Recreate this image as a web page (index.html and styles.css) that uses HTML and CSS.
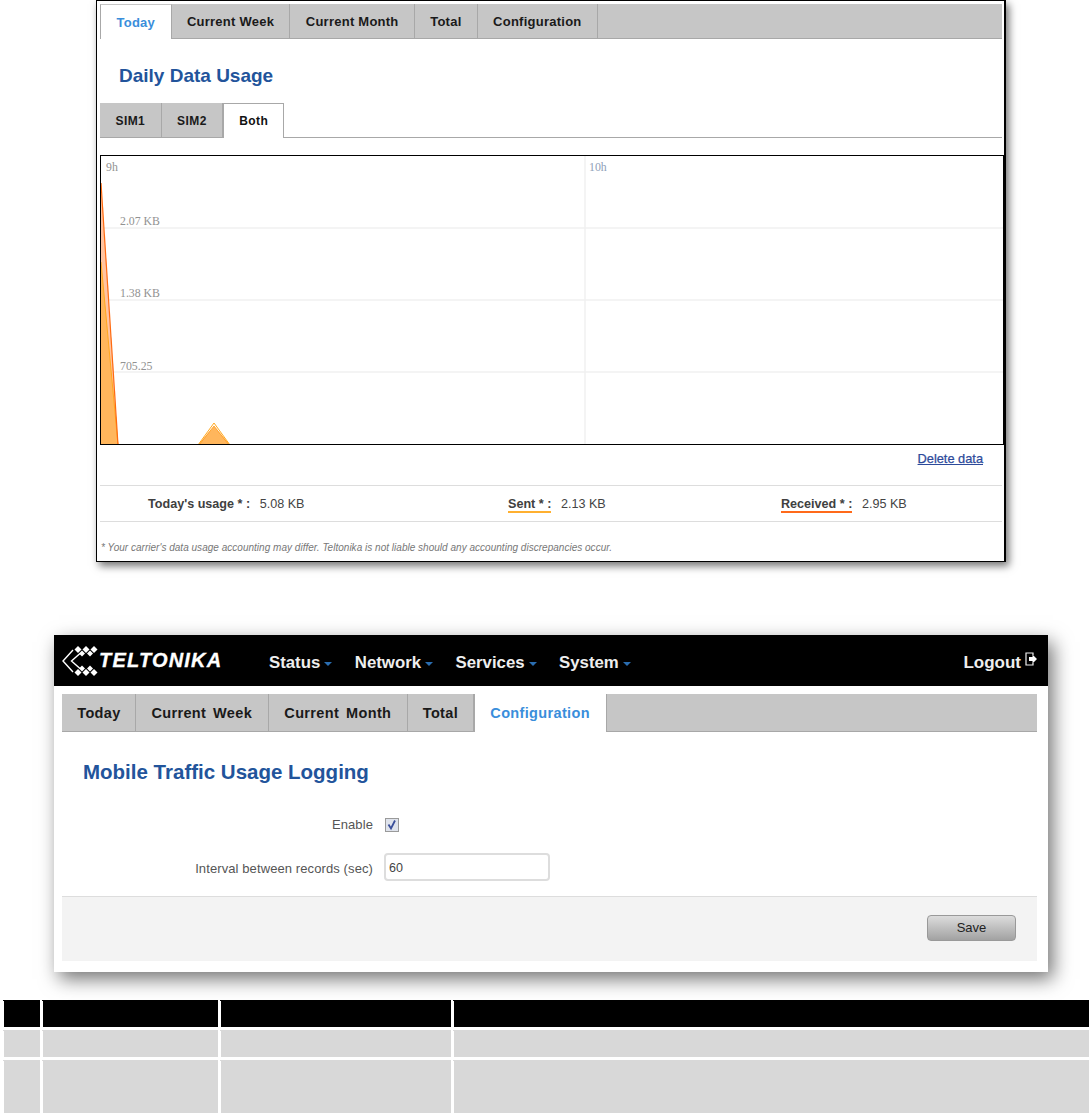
FILE: index.html
```html
<!DOCTYPE html>
<html lang="en">
<head>
<meta charset="utf-8">
<title>Teltonika mobile traffic usage</title>
<link rel="stylesheet" href="styles.css">
</head>
<body>
<section class="usage-card">
  <nav class="tabs small">
    <a class="tab active">Today</a>
    <a class="tab">Current Week</a>
    <a class="tab">Current Month</a>
    <a class="tab">Total</a>
    <a class="tab">Configuration</a>
  </nav>
  <h2 class="usage-title">Daily Data Usage</h2>
  <nav class="subtabs">
    <a class="subtab">SIM1</a>
    <a class="subtab">SIM2</a>
    <a class="subtab active">Both</a>
  </nav>
  <div class="chart">
    <svg class="chart-svg" width="902" height="288" viewBox="101 156 902 288">
      <g class="grid">
        <line x1="101" y1="228" x2="1003" y2="228"/>
        <line x1="101" y1="300" x2="1003" y2="300"/>
        <line x1="101" y1="372" x2="1003" y2="372"/>
        <line x1="585" y1="156" x2="585" y2="444"/>
      </g>
      <polygon class="area-recv" points="101,183 118,445 101,445"/>
      <polygon class="area-sent" points="101,262 118,445 101,445"/>
      <polygon class="area-sent" points="214,426 198,445 230,445"/>
      <polyline class="line-sent" points="198,445 214,423 230,445"/>
      <polyline class="line-sent" points="101,262 118,445"/>
      <polyline class="line-recv" points="101,183 118,445"/>
      <polyline class="line-recv thin" points="199,445 214,426 229,445"/>
      <g class="axis">
        <text x="106" y="171">9h</text>
        <text class="alt" x="589" y="171">10h</text>
        <text x="120" y="225">2.07 KB</text>
        <text x="120" y="297">1.38 KB</text>
        <text x="120" y="370">705.25</text>
      </g>
    </svg>
  </div>
  <div class="delete-row"><a class="delete-link">Delete data</a></div>
  <div class="stats">
    <div class="stat first"><span class="stat-label">Today's usage * :</span><span class="stat-value">5.08 KB</span></div>
    <div class="stat second"><span class="stat-label sent">Sent * :</span><span class="stat-value">2.13 KB</span></div>
    <div class="stat third"><span class="stat-label recv">Received * :</span><span class="stat-value">2.95 KB</span></div>
  </div>
  <p class="note">* Your carrier's data usage accounting may differ. Teltonika is not liable should any accounting discrepancies occur.</p>
</section>

<section class="config-card">
  <header class="topbar">
    <div class="logo">
      <svg class="logo-mark" width="38" height="30" viewBox="0 0 38 30">
        <path class="chev" d="M11 4 L1 15 L11 26"/>
        <path class="chev" d="M18 7.500 L9.500 15 L18 22.500"/>
        <g class="dots">
          <path d="M16 0 l3.500 3.500 l-3.500 3.500 l-3.500 -3.500z"/>
          <path d="M20 4.500 l3 3 l-3 3 l-3 -3z"/>
          <path d="M24 0 l3.500 3.500 l-3.500 3.500 l-3.500 -3.500z"/>
          <path d="M28 4.500 l3 3 l-3 3 l-3 -3z"/>
          <path d="M32 0 l3.500 3.500 l-3.500 3.500 l-3.500 -3.500z"/>
          <path d="M16 23 l3.500 3.500 l-3.500 3.500 l-3.500 -3.500z"/>
          <path d="M20 19.500 l3 3 l-3 3 l-3 -3z"/>
          <path d="M24 23 l3.500 3.500 l-3.500 3.500 l-3.500 -3.500z"/>
          <path d="M28 19.500 l3 3 l-3 3 l-3 -3z"/>
          <path d="M32 23 l3.500 3.500 l-3.500 3.500 l-3.500 -3.500z"/>
        </g>
      </svg>
      <span class="logo-text">TELTONIKA</span>
    </div>
    <ul class="menu">
      <li class="menu-item">Status<i class="caret"></i></li>
      <li class="menu-item">Network<i class="caret"></i></li>
      <li class="menu-item">Services<i class="caret"></i></li>
      <li class="menu-item">System<i class="caret"></i></li>
    </ul>
    <a class="logout">Logout
      <svg class="logout-icon" width="12" height="14" viewBox="0 0 12 14">
        <path class="door" d="M8 3 V1 H1 V13 H8 V11"/>
        <path class="arrow" d="M4 5 H7.500 V2.500 L12 7 L7.500 11.500 V9 H4z"/>
      </svg>
    </a>
  </header>
  <div class="config-body">
    <nav class="tabs large">
      <a class="tab">Today</a>
      <a class="tab">Current Week</a>
      <a class="tab">Current Month</a>
      <a class="tab">Total</a>
      <a class="tab active">Configuration</a>
    </nav>
    <h2 class="config-title">Mobile Traffic Usage Logging</h2>
    <form class="form">
      <label class="form-label">Enable</label>
      <span class="checkbox">
        <svg width="13" height="13" viewBox="0 0 13 13"><path d="M3.500 6.500 L6 10.500 L10 2.500"/></svg>
      </span>
      <label class="form-label lower">Interval between records (sec)</label>
      <input class="text-input" type="text" value="60">
    </form>
    <footer class="form-footer"><button class="save" type="button">Save</button></footer>
  </div>
</section>

<div class="table">
  <div class="cell head"></div><div class="cell head"></div><div class="cell head"></div><div class="cell head"></div>
  <div class="cell row-a"></div><div class="cell row-a"></div><div class="cell row-a"></div><div class="cell row-a"></div>
  <div class="cell row-b"></div><div class="cell row-b"></div><div class="cell row-b"></div><div class="cell row-b"></div>
</div>
</body>
</html>
```
FILE: styles.css
```css
* { box-sizing: border-box; }
html, body { margin: 0; padding: 0; background: #fff; }
body { font-family: "Liberation Sans", Arial, sans-serif; color: #404040; height: 1116px; overflow: hidden; }

/* shared tabs */
.tabs { display: flex; background: #c6c6c6; border-bottom: 1px solid #a8a8a8; }
.tab { display: flex; align-items: center; font-weight: bold; color: #1a1a1a; border-right: 1px solid #a8a8a8; }
.tab.active { background: #fff; color: #3a8edb; margin-bottom: -1px; }
.tabs.small { width: 902px; height: 35px; font-size: 13px; letter-spacing: .25px; }
.tabs.small .tab { padding: 0 15.300px; }
.tabs.small .tab.active { border: 1px solid #a8a8a8; border-bottom: 0; border-top-color: #c6c6c6; padding: 0 15.500px; }
.tabs.large { height: 38px; font-size: 14.500px; letter-spacing: .35px; word-spacing: 2.500px; }
.tabs.large .tab { padding: 0 15.250px; }
.tabs.large .tab:first-child { padding-right: 14.500px; }
.tabs.large .tab:nth-child(2) { padding-right: 16px; }
.tabs.large .tab.active { border-left: 1px solid #a8a8a8; padding: 0 16px 0 15px; }

/* top card */
.usage-card { width: 910px; height: 562px; margin-left: 96px; padding: 3px 0 0 3px; background: #fff;
  border: 1px solid #000; border-right-width: 2px; box-shadow: 3px 4px 8px rgba(0,0,0,.55); }
.usage-title { margin: 0; padding: 25px 0 0 19px; height: 64px; font-size: 19px; line-height: 24px; color: #22549b; }
.subtabs { display: flex; width: 902px; height: 35px; border-bottom: 1px solid #a8a8a8; }
.subtab { display: flex; align-items: center; padding: 1px 15.500px 0; background: #c6c6c6; border-right: 1px solid #a8a8a8;
  font-size: 12px; font-weight: bold; letter-spacing: .4px; color: #1a1a1a; }
.subtab.active { background: #fff; color: #111; border: 1px solid #a8a8a8; border-bottom: 0; margin-bottom: -1px; padding: 0 15px; }
.chart { width: 904px; height: 290px; margin-top: 17px; border: 1px solid #000; overflow: hidden; }
.chart-svg { display: block; }
.grid line { stroke: #f0f0f0; stroke-width: 1.500; }
.axis text { font-family: "Liberation Serif", serif; font-size: 11.800px; fill: #929292; }
.axis .alt { fill: #8fa0b8; }
.area-sent { fill: #ffb65c; }
.area-recv { fill: #ffc4a0; }
.line-sent { fill: none; stroke: #ffa81e; stroke-width: 1; }
.line-recv { fill: none; stroke: #ff6a10; stroke-width: 1.200; }
.line-recv.thin { stroke: #ff9a20; stroke-width: .8; }
.delete-row { display: flex; justify-content: flex-end; width: 902px; height: 40px; padding: 6px 19px 0 0; }
.delete-link { font-size: 12.800px; line-height: 15px; height: 15px; color: #2d4a9a; text-decoration: underline; -webkit-text-stroke: .25px #2d4a9a; }
.stats { display: flex; height: 37px; width: 902px; border-top: 1px solid #ddd; border-bottom: 1px solid #ddd; font-size: 12.600px; }
.stat { display: flex; align-items: center; }
.stat.first { width: 359px; padding-left: 48px; }
.stat.second { width: 274px; padding-left: 49px; }
.stat.third { padding-left: 48px; }
.stat-label { font-weight: bold; color: #404040; margin-right: 9.500px; }
.stat-value { color: #444; }
.stat-label.sent { border-bottom: 2px solid #ffb030; margin-top: 2px; }
.stat-label.recv { border-bottom: 2px solid #ff6a1a; margin-top: 2px; }
.note { margin: 0; padding: 20px 0 0 1px; font-size: 10px; line-height: 12px; letter-spacing: .02px; font-style: italic; color: #777; }

/* config card */
.config-card { width: 994px; height: 337px; margin: 73px 0 0 54px; background: #fff;
  box-shadow: 5px 7px 18px rgba(0,0,0,.55); }
.topbar { display: flex; align-items: center; height: 51px; background: #000; color: #eee; padding: 0 11px 0 8px; }
.logo { display: flex; align-items: center; width: 207px; }
.logo-mark { flex: none; }
.chev { fill: none; stroke: #fff; stroke-width: 1.400; }
.dots path { fill: #fff; }
.logo-text { margin-left: -1px; font-size: 20px; font-weight: bold; font-style: italic; color: #fff; letter-spacing: 1.200px; -webkit-text-stroke: .3px #fff; }
.menu { display: flex; list-style: none; margin: 0; padding: 5px 0 0; font-size: 16.800px; font-weight: bold; color: #eee; flex: 1; }
.menu-item { display: flex; align-items: center; margin-right: 22.500px; }
.caret { width: 0; height: 0; margin: 2px 0 0 4px; border: 4px solid transparent; border-top-color: #2a6db0; border-bottom-width: 0; }
.logout { display: flex; align-items: center; gap: 4px; padding-top: 5px; font-size: 17px; font-weight: bold; color: #eee; }
.logout-icon { margin-top: -9px; }
.door { fill: none; stroke: #eee; stroke-width: 1.200; }
.arrow { fill: #fff; }
.config-body { padding: 8px 11px 0 8px; }
.config-title { margin: 0; padding: 27px 0 0 21px; height: 79px; font-size: 20.500px; line-height: 26px; color: #22549b; }
.form { display: grid; grid-template-columns: 311px 1fr; column-gap: 11px; row-gap: 21px; align-items: center; align-content: start; height: 85px; padding-top: 7px; color: #555; }
.form-label { text-align: right; font-size: 13px; line-height: 14px; letter-spacing: .1px; }
.form-label.lower { padding-top: 3px; }
.checkbox { display: flex; width: 14px; height: 14px; margin-left: 1px; background: #dfe3ec; border: 1px solid #9a9a9a; }
.checkbox svg { display: block; margin: -1px; }
.checkbox path { fill: none; stroke: #3a4f9a; stroke-width: 1.800; }
.text-input { width: 166px; height: 28px; padding: 1px 3px 0; border: 2px solid #ddd; border-radius: 4px; font: 12.500px "Liberation Sans", sans-serif; color: #444; outline: 0; }
.form-footer { display: flex; justify-content: flex-end; align-items: center; height: 65px; padding: 0 21px 2px 0; background: #f3f3f3; border-top: 1px solid #ddd; }
.save { width: 89px; height: 26px; padding: 0 0 2px; border: 1px solid #999; border-radius: 4px; background: linear-gradient(#dcdcdc, #a2a2a2); font: 13px "Liberation Sans", sans-serif; color: #222; }

/* blank table */
.table { display: grid; width: 1086px; margin: 28px 0 0 4px; grid-template-columns: 36px 175px 230px 635px; grid-template-rows: 27px 27px 53px; gap: 3px; }
.cell { position: relative; }
.head { background: #000; }
.row-a, .row-b { background: #d8d8d8; }
.cell::before { content: ""; position: absolute; left: -1px; top: 0; width: 1px; height: 1px; background: inherit; }
```
